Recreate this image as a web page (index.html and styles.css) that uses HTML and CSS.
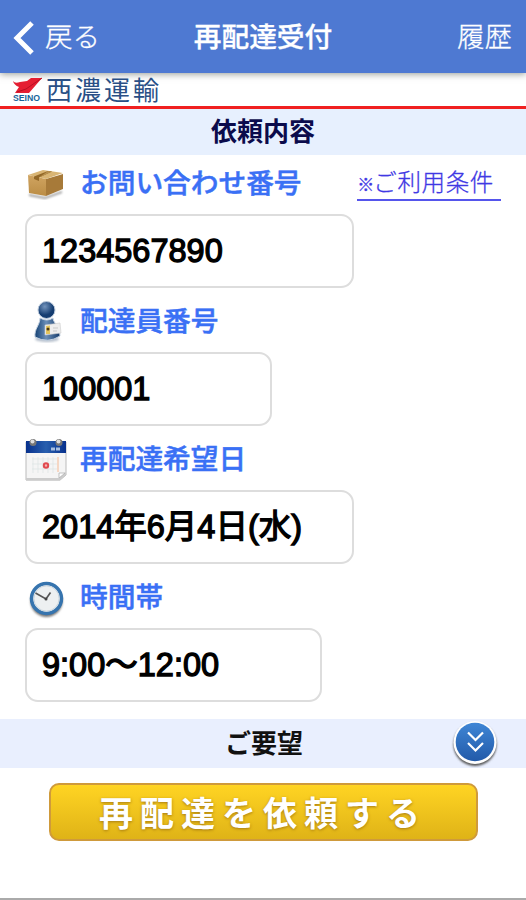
FILE: index.html
```html
<!DOCTYPE html>
<html lang="ja">
  <head>
    <meta charset="utf-8">
    <title>再配達受付</title>
    <link rel="stylesheet" href="styles.css">
  </head>
  <body>
    <div class="header">
      <a class="back">
        <svg width="22" height="34" viewBox="0 0 22 34"><path d="M20 2 5 17 20 32" fill="none" stroke="#fff" stroke-width="5"/></svg>
        <span>戻る</span>
      </a>
      <h1 class="title">再配達受付</h1>
      <a class="history">履歴</a>
    </div>

    <div class="brand">
      <svg class="logo" width="31" height="26" viewBox="0 0 31 26">
        <path d="M1 4Q3 7 8 5L15 4 19 1H30L17 16H3L7 10Q2 8 1 4Z" fill="#e51e32"/>
        <path d="M30 1 14 12 5 15" fill="none" stroke="#b90f22" stroke-width="1"/>
        <text class="logo_text" x="1" y="24" textLength="27" lengthAdjust="spacingAndGlyphs">SEINO</text>
      </svg>
      <span class="company">西濃運輸</span>
    </div>

    <h2 class="section">依頼内容</h2>

    <div class="form">
      <div class="label first">
        <svg class="icon" width="42" height="44" viewBox="0 0 42 44">
          <defs>
            <linearGradient id="box" x2="0" y2="1"><stop stop-color="#d0a461"/><stop offset="1" stop-color="#bb8d45"/></linearGradient>
            <filter id="soft"><feGaussianBlur stdDeviation="1.2"/></filter>
          </defs>
          <path d="M4 32 20 35 37 29V31L20 37 4 34Z" fill="#999" filter="url(#soft)"/>
          <path d="M3 13 21 17 21 34 4 31Z" fill="url(#box)"/>
          <path d="M21 17 38 12 38 27 21 34Z" fill="#a77a39"/>
          <path d="M3 13 18 8 38 11 21 17Z" fill="#d9b574"/>
          <path d="M9 14.500 23 9 27 9.500 14 15.500V19L9 17Z" fill="#936827"/>
          <path d="M23 9 27 9.500 14 15.500" fill="#b8914f"/>
        </svg>
        <span>お問い合わせ番号</span>
        <a class="terms"><span class="mark">※</span>ご利用条件&nbsp;</a>
      </div>
      <div class="field">1234567890</div>

      <div class="label">
        <svg class="icon" width="42" height="44" viewBox="0 0 42 44">
          <defs>
            <radialGradient id="head" cx=".4" cy=".3"><stop stop-color="#7394bd"/><stop offset="1" stop-color="#143c70"/></radialGradient>
            <linearGradient id="suit"><stop stop-color="#164274"/><stop offset=".45" stop-color="#6a8eb8"/><stop offset="1" stop-color="#143a6a"/></linearGradient>
          </defs>
          <ellipse cx="22" cy="39" rx="12" ry="3" fill="#b5bfcc" filter="url(#soft)"/>
          <path d="M15 18Q22 22 28 18C28 23 35 26 35 36Q23 44 10 37C9 29 15 25 15 18Z" fill="url(#suit)" stroke="#c7d4e2"/>
          <circle cx="21.500" cy="10" r="8.500" fill="url(#head)" stroke="#bdcbdc"/>
          <path d="M20 25 35 23 36 33 20 35Z" fill="#eee" stroke="#ccc" stroke-width=".6"/>
          <path d="M21 26 25 25.500V34H21Z" fill="#e4c55e"/>
          <circle cx="23" cy="29" r="1.500" fill="#4a3517"/>
          <path d="M28 28H33M28 31H32" stroke="#c9c9c9"/>
        </svg>
        <span>配達員番号</span>
      </div>
      <div class="field narrow">100001</div>

      <div class="label">
        <svg class="icon" width="42" height="44" viewBox="0 0 42 44">
          <defs>
            <linearGradient id="bar"><stop stop-color="#08318d"/><stop offset=".5" stop-color="#285fae"/><stop offset="1" stop-color="#08318d"/></linearGradient>
          </defs>
          <path d="M1 4H41V37L35 42H1Z" fill="#f5f5f5" stroke="#bbb"/>
          <path d="M1 40H34L41 34V37L35 42.500H1Z" fill="#ccc"/>
          <path d="M34 40V35H40Z" fill="#fff" stroke="#aaa" stroke-width=".7"/>
          <path d="M1 3H41V15H1Z" fill="url(#bar)"/>
          <path d="M8 19V35M13 19V35M18 19V35M23 19V35M28 19V35M7 21H34M7 26H34M7 31H34" stroke="#dde4e4" stroke-width=".7"/>
          <path d="M33 19V34" stroke="#f5d7c4" stroke-width="2"/>
          <circle cx="21" cy="27.500" r="2.200" fill="#f3b3b3" stroke="#e14b50" stroke-width="2"/>
          <path d="M26 11H36" stroke="#a9bfdf" stroke-width="3" stroke-dasharray="4 1"/>
          <circle cx="8" cy="4.500" r="3.500" fill="#777"/><circle cx="7.500" cy="3.500" r="2" fill="#ddd"/>
          <circle cx="34" cy="4.500" r="3.500" fill="#777"/><circle cx="33.500" cy="3.500" r="2" fill="#ddd"/>
        </svg>
        <span>再配達希望日</span>
      </div>
      <div class="field">2014年6月4日(水)</div>

      <div class="label">
        <svg class="icon" width="42" height="44" viewBox="0 0 42 44">
          <circle cx="21.500" cy="25" r="16" fill="#777" filter="url(#soft)"/>
          <circle cx="21.500" cy="22.500" r="15" fill="#edf0f1" stroke="#3674ae" stroke-width="3.500"/>
          <circle cx="21.500" cy="22.500" r="12.600" fill="none" stroke="#cbd6de"/>
          <path d="M10.500 17 21 23 25.500 16.500" fill="none" stroke="#555" stroke-width="1.700"/>
          <circle cx="21" cy="23" r="1.500" fill="#444"/>
        </svg>
        <span>時間帯</span>
      </div>
      <div class="field medium">9:00〜12:00</div>
    </div>

    <div class="section request">
      <span>ご要望</span>
      <svg class="open" width="50" height="50" viewBox="0 0 50 50">
        <defs>
          <linearGradient id="round" x2="0" y2="1"><stop stop-color="#3f86d5"/><stop offset="1" stop-color="#225aa9"/></linearGradient>
        </defs>
        <circle cx="25" cy="26.500" r="21.500" fill="#555" filter="url(#soft)"/>
        <circle cx="25" cy="24.500" r="21.500" fill="#fff"/>
        <circle cx="25" cy="24" r="19.300" fill="url(#round)"/>
        <path d="M18 14.500 25.500 22 33 14.500M18 25 25.500 32.500 33 25" fill="none" stroke="#fff" stroke-width="2.200"/>
      </svg>
    </div>

    <button class="submit">再配達を依頼する</button>
  </body>
</html>
```
FILE: styles.css
```css
* {
  box-sizing: border-box;
}
body {
  display: flex;
  flex-direction: column;
  margin: 0;
  height: 900px;
  overflow: hidden;
  background-color: #fff;
  border-bottom: 2px solid #aaa;
  font-family: "Liberation Sans", "Noto Sans CJK JP", sans-serif;
}
.header {
  display: grid;
  grid-template-columns: 1fr auto 1fr;
  align-items: center;
  flex: none;
  height: 73px;
  padding: 2px 14px 0 12px;
  background-color: #4e79d2;
  box-shadow: 0 1px 7px rgba(60, 70, 60, 0.55);
  color: #fff;
  font-size: 27.5px;
  line-height: 40px;
}
.back {
  display: flex;
  align-items: center;
  gap: 11px;
  font-weight: 300;
  -webkit-text-stroke: 0.3px #fff;
}
.title {
  margin: 0;
  padding-left: 2px;
  font-size: 27.7px;
  font-weight: 500;
  -webkit-text-stroke: 0.3px #fff;
}
.history {
  text-align: right;
  font-weight: 300;
  -webkit-text-stroke: 0.3px #fff;
}
.brand {
  display: flex;
  align-items: center;
  flex: none;
  height: 36px;
  padding-left: 12px;
  border-bottom: 3px solid #f02020;
}
.logo {
  margin-right: 3px;
}
.logo_text {
  font-family: "Liberation Sans", sans-serif;
  font-size: 9px;
  font-weight: bold;
  fill: #17649a;
}
.company {
  padding-top: 2px;
  color: #294f86;
  font-size: 26px;
  letter-spacing: 3px;
  line-height: 32px;
}
.section {
  flex: none;
  height: 46px;
  margin: 0;
  background-color: #e7f0fe;
  color: #0b0b4c;
  font-size: 26px;
  font-weight: bold;
  line-height: 46px;
  text-align: center;
}
.form {
  flex: none;
  padding: 0 25px 17px;
}
.label {
  display: flex;
  align-items: center;
  height: 64px;
  padding-top: 3px;
  color: #3a70f5;
  font-size: 27.7px;
  font-weight: 500;
  line-height: 40px;
  -webkit-text-stroke: 0.5px #3a70f5;
}
.first {
  height: 59px;
  padding-top: 0;
  padding-bottom: 2px;
}
.icon {
  flex: none;
  margin-right: 13px;
}
.terms {
  margin-left: auto;
  margin-top: 3px;
  border-bottom: 2px solid #5555ec;
  color: #4038e4;
  font-size: 23.5px;
  font-weight: 300;
  letter-spacing: 0.6px;
  line-height: 27px;
  -webkit-text-stroke: 0.3px #4038e4;
}
.mark {
  display: inline-block;
  width: 16px;
  font-size: 17px;
  font-weight: 500;
}
.field {
  width: 329px;
  height: 74px;
  padding-left: 15px;
  border: 2px solid #ddd;
  border-radius: 13px;
  color: #000;
  font-size: 32.5px;
  font-weight: 400;
  line-height: 70px;
  white-space: nowrap;
  -webkit-text-stroke: 1.3px #000;
}
.narrow {
  width: 247px;
}
.medium {
  width: 297px;
}
.request {
  display: flex;
  align-items: center;
  justify-content: center;
  position: relative;
  height: 49px;
  padding-left: 2px;
  background-color: #e9effe;
  color: #111;
}
.open {
  position: absolute;
  right: 26px;
  top: -1px;
}
.submit {
  flex: none;
  align-self: center;
  width: 429px;
  height: 58px;
  margin-top: 15px;
  padding: 0;
  border: 2px solid #cf9a3b;
  border-radius: 10px;
  background: linear-gradient(#ffd423, #dfb317);
  color: #fff;
  font-family: "Noto Sans CJK JP", sans-serif;
  font-size: 34px;
  font-weight: bold;
  letter-spacing: 7px;
  line-height: 54px;
  text-shadow: 0 1px 3px #a67a12;
}
```
